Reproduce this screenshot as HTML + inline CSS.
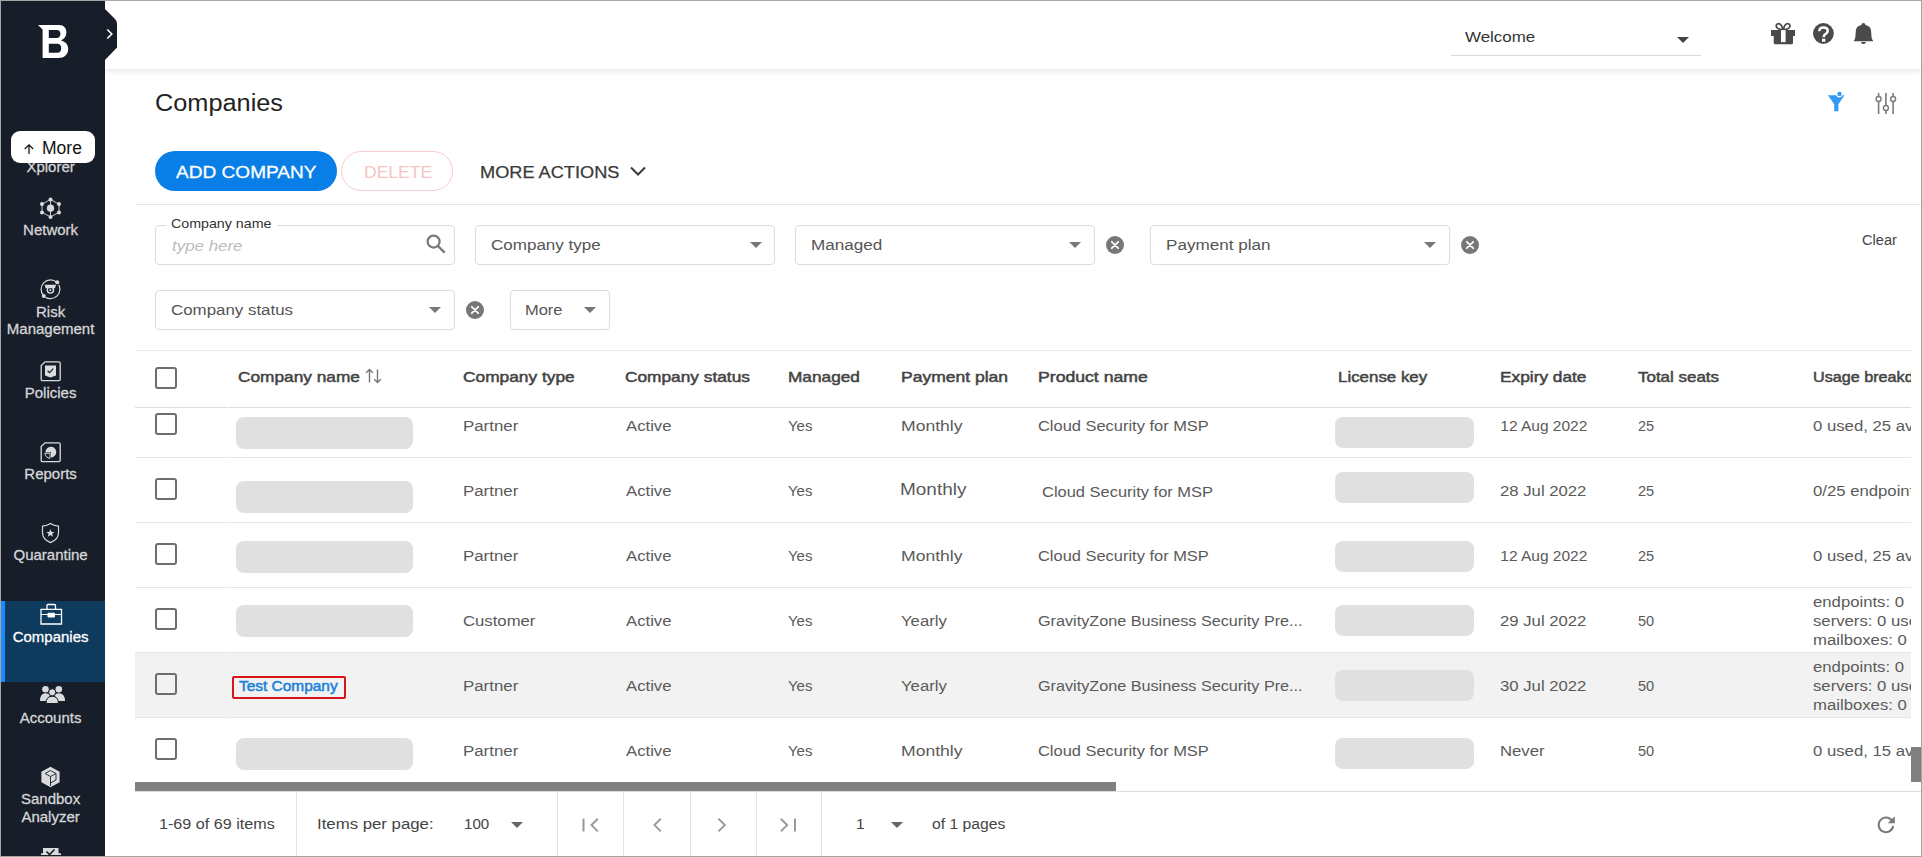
<!DOCTYPE html>
<html><head><meta charset="utf-8"><style>
*{box-sizing:border-box;margin:0;padding:0}
html,body{width:1922px;height:857px;overflow:hidden;background:#fff;font-family:"Liberation Sans",sans-serif}
.a{position:absolute;display:block}
.t{position:absolute;white-space:nowrap;line-height:1;z-index:3;transform-origin:0 0}
.frame{position:absolute;left:0;top:0;width:1922px;height:857px;border:1px solid #a6a6a6;z-index:100;pointer-events:none}
.cb{position:absolute;width:22px;height:22px;border:2px solid #6e6e6e;border-radius:3px;background:transparent}
.box{position:absolute;border:1px solid #dcdcdc;border-radius:4px;background:#fff}
.ph{position:absolute;background:#e0e0e0}
.hl{position:absolute;left:135px;width:1776px;height:1px;background:#e6e6e6}
.vl{position:absolute;width:1px;background:#e3e3e3}
</style></head><body>
<div class="frame"></div>
<div class="a" style="left:1px;top:1px;width:104px;height:855px;background:#181e29"></div>
<div class="a" style="left:1px;top:601px;width:104px;height:81px;background:#0e3a5e"></div>
<div class="a" style="left:1px;top:601px;width:4px;height:81px;background:#1a8cff"></div>
<svg class="a" style="left:105px;top:8px;z-index:5" width="14" height="54" viewBox="0 0 14 54"><path d="M0 1L10 11Q12 13 12 15.5V39.5L0 52Z" fill="#181e29"/><path d="M2.3 21.5L6.8 26L2.3 30.5" stroke="#fff" stroke-width="1.6" fill="none"/></svg>
<svg class="a" style="left:0;top:0" width="105" height="70" viewBox="0 0 105 70"><path fill="#fff" fill-rule="evenodd" d="M38 25H59C64 25 66.4 28.2 66.4 32.5C66.4 36 64.4 39 61 40.4C65.5 41.6 68.2 44.6 68.2 49C68.2 54.6 64.4 58 58 58H42.6V29.6Z M48.8 30.1H56.8C59.2 30.1 60.4 31.6 60.4 34C60.4 36.4 59.2 37.9 56.8 37.9H48.8Z M48.8 43.8H57.4C59.9 43.8 61.2 45.5 61.2 48.2C61.2 51 59.9 52.7 57.4 52.7H48.8Z"/></svg>
<div class="a" style="left:11px;top:131px;width:84px;height:32px;background:#fff;border-radius:9px;z-index:5"></div>
<svg class="a" style="left:23px;top:143px;z-index:6" width="12" height="12" viewBox="0 0 12 12"><path d="M6 11V1.8M1.8 6L6 1.8L10.2 6" stroke="#111" stroke-width="1.25" fill="none"/></svg>
<div class="t" style="left:42px;top:140px;font-size:17.5px;color:#111;z-index:6">More</div>
<div class="a" style="left:105px;top:1px;width:1816px;height:68px;background:#fff;box-shadow:0 2px 6px rgba(0,0,0,0.11);z-index:2"></div>
<div class="a" style="left:1451px;top:55px;width:250px;height:1px;background:#d9d9d9;z-index:3"></div>
<svg class="a" style="left:1677px;top:37px;z-index:3" width="12" height="6" viewBox="0 0 12 6"><path d="M0 0H12L6 6Z" fill="#444"/></svg>
<svg class="a" style="left:1769px;top:21px;z-index:3" width="110" height="26" viewBox="1769 21 110 26">
<g fill="#4a4a4a">
<path d="M1771 30.1H1795V35.9H1771Z M1773.7 35.9H1793V43.1Q1793 44.2 1791.9 44.2H1774.8Q1773.7 44.2 1773.7 43.1Z"/>
</g>
<path d="M1782.6 29.6C1779.6 29.8 1776.4 28.4 1776.2 26.2C1776 24.2 1778.2 23.2 1779.8 24C1781.4 24.8 1782.4 27.4 1782.6 29.6Z M1783.6 29.6C1786.6 29.8 1789.8 28.4 1790 26.2C1790.2 24.2 1788 23.2 1786.4 24C1784.8 24.8 1783.8 27.4 1783.6 29.6Z" fill="none" stroke="#4a4a4a" stroke-width="1.7"/>
<rect x="1781" y="30.1" width="4.6" height="12" fill="#fff"/>
<circle cx="1823.4" cy="33.5" r="10.4" fill="#4a4a4a"/>
<path d="M1819.3 31.3Q1819.3 27.6 1823.5 27.6Q1827.7 27.6 1827.7 30.9Q1827.7 32.8 1825.6 34Q1823.8 35 1823.8 36.4V37.3" fill="none" stroke="#fff" stroke-width="2.5"/>
<rect x="1822" y="38.8" width="3.3" height="2.9" fill="#fff"/>
<path fill="#4a4a4a" d="M1863.4 23Q1865.4 23 1865.5 24.9Q1870.4 25.9 1871 30.2L1871.6 37.4Q1871.9 39.4 1873 40.4V41.2H1853.9V40.4Q1855 39.4 1855.3 37.4L1855.9 30.2Q1856.5 25.9 1861.4 24.9Q1861.5 23 1863.4 23Z M1860.9 42H1866Q1865.6 44 1863.45 44Q1861.3 44 1860.9 42Z"/>
</svg>
<svg class="a" style="left:1825px;top:89px" width="80" height="28" viewBox="1825 89 80 28">
<path fill="#3399f5" d="M1828 95.3H1836Q1837.2 97.6 1839.4 97.6Q1841.5 97.6 1842.5 95.2L1844.5 95.3L1838.4 104.2V111.2H1834.2V104.2Z"/>
<circle cx="1839.5" cy="93.9" r="2.2" fill="#3399f5"/>
<g stroke="#7a7a7a" stroke-width="1.6" fill="none">
<path d="M1878.6 93V96.2M1878.6 101.8V114M1885.9 93V105.2M1885.9 110.8V114M1893.1 93V96.2M1893.1 101.8V114"/>
<circle cx="1878.6" cy="99" r="2.5" stroke-width="1.4"/><circle cx="1885.9" cy="108" r="2.5" stroke-width="1.4"/><circle cx="1893.1" cy="99" r="2.5" stroke-width="1.4"/>
</g></svg>
<div class="a" style="left:155px;top:151px;width:182px;height:40px;border-radius:20px;background:#087ee6"></div>
<div class="a" style="left:341px;top:151px;width:112px;height:40px;border-radius:20px;border:1px solid #f7cccc"></div>
<svg class="a" style="left:629px;top:165px" width="18" height="12" viewBox="0 0 18 12"><path d="M2 2.5L9 9.5L16 2.5" stroke="#3a3a3a" stroke-width="2" fill="none"/></svg>
<div class="a" style="left:135px;top:204px;width:1786px;height:1px;background:#e6e6e6"></div>
<div class="box" style="left:155px;top:225px;width:300px;height:40px"></div><div class="a" style="left:166px;top:222px;width:111px;height:6px;background:#fff"></div>
<svg class="a" style="left:425px;top:233px" width="22" height="22" viewBox="0 0 22 22"><circle cx="8.6" cy="8.6" r="6" stroke="#777" stroke-width="2.2" fill="none"/><path d="M13 13L19.6 19.6" stroke="#777" stroke-width="2.4"/></svg>
<div class="box" style="left:475px;top:225px;width:300px;height:40px"></div><svg class="a" style="left:749.5px;top:241.8px" width="12" height="6" viewBox="0 0 12 6"><path d="M0 0H12L6.0 6Z" fill="#777"/></svg><div class="box" style="left:795px;top:225px;width:300px;height:40px"></div><svg class="a" style="left:1068.5px;top:241.8px" width="12" height="6" viewBox="0 0 12 6"><path d="M0 0H12L6.0 6Z" fill="#777"/></svg><svg class="a" style="left:1106px;top:235.5px" width="18" height="18" viewBox="0 0 18 18"><circle cx="9" cy="9" r="9" fill="#777"/><path d="M5.8 5.8L12.2 12.2M12.2 5.8L5.8 12.2" stroke="#fff" stroke-width="1.8" stroke-linecap="round"/></svg><div class="box" style="left:1150px;top:225px;width:300px;height:40px"></div><svg class="a" style="left:1424px;top:241.8px" width="12" height="6" viewBox="0 0 12 6"><path d="M0 0H12L6.0 6Z" fill="#777"/></svg><svg class="a" style="left:1461px;top:235.5px" width="18" height="18" viewBox="0 0 18 18"><circle cx="9" cy="9" r="9" fill="#777"/><path d="M5.8 5.8L12.2 12.2M12.2 5.8L5.8 12.2" stroke="#fff" stroke-width="1.8" stroke-linecap="round"/></svg><div class="box" style="left:155px;top:290px;width:300px;height:40px"></div><svg class="a" style="left:429px;top:307px" width="12" height="6" viewBox="0 0 12 6"><path d="M0 0H12L6.0 6Z" fill="#777"/></svg><svg class="a" style="left:466px;top:301px" width="18" height="18" viewBox="0 0 18 18"><circle cx="9" cy="9" r="9" fill="#777"/><path d="M5.8 5.8L12.2 12.2M12.2 5.8L5.8 12.2" stroke="#fff" stroke-width="1.8" stroke-linecap="round"/></svg><div class="box" style="left:510px;top:290px;width:100px;height:40px"></div><svg class="a" style="left:584px;top:307px" width="12" height="6" viewBox="0 0 12 6"><path d="M0 0H12L6.0 6Z" fill="#777"/></svg><div class="a" style="left:135px;top:652px;width:1776px;height:65px;background:#f2f2f2"></div>
<div class="hl" style="top:350px;width:1786px;background:#e6e8eb"></div>
<div class="hl" style="top:407px;background:#d9dee4"></div>
<div class="a" style="left:227px;top:407px;width:1px;height:1px;background:#fff;z-index:1"></div>
<div class="hl" style="top:457px"></div>
<div class="a" style="left:227px;top:457px;width:1px;height:1px;background:#fff;z-index:1"></div>
<div class="hl" style="top:522px"></div>
<div class="a" style="left:227px;top:522px;width:1px;height:1px;background:#fff;z-index:1"></div>
<div class="hl" style="top:587px"></div>
<div class="a" style="left:227px;top:587px;width:1px;height:1px;background:#fff;z-index:1"></div>
<div class="hl" style="top:652px"></div>
<div class="a" style="left:227px;top:652px;width:1px;height:1px;background:#fff;z-index:1"></div>
<div class="hl" style="top:717px"></div>
<div class="a" style="left:227px;top:717px;width:1px;height:1px;background:#fff;z-index:1"></div>
<div class="cb" style="left:155px;top:367px"></div>
<div class="cb" style="left:155px;top:413px"></div>
<div class="cb" style="left:155px;top:478px"></div>
<div class="cb" style="left:155px;top:543px"></div>
<div class="cb" style="left:155px;top:608px"></div>
<div class="cb" style="left:155px;top:673px"></div>
<div class="cb" style="left:155px;top:738px"></div>
<div class="ph" style="left:236px;top:417px;width:177px;height:32px;border-radius:8px"></div>
<div class="ph" style="left:236px;top:481px;width:177px;height:32px;border-radius:8px"></div>
<div class="ph" style="left:236px;top:541px;width:177px;height:32px;border-radius:8px"></div>
<div class="ph" style="left:236px;top:605px;width:177px;height:32px;border-radius:8px"></div>
<div class="ph" style="left:236px;top:738px;width:177px;height:32px;border-radius:8px"></div>
<div class="ph" style="left:1335px;top:417px;width:139px;height:31px;border-radius:8px"></div>
<div class="ph" style="left:1335px;top:472px;width:139px;height:31px;border-radius:8px"></div>
<div class="ph" style="left:1335px;top:541px;width:139px;height:31px;border-radius:8px"></div>
<div class="ph" style="left:1335px;top:605px;width:139px;height:31px;border-radius:8px"></div>
<div class="ph" style="left:1335px;top:670px;width:139px;height:31px;border-radius:8px"></div>
<div class="ph" style="left:1335px;top:738px;width:139px;height:31px;border-radius:8px"></div>
<div class="a" style="left:232px;top:676px;width:114px;height:23px;border:2px solid #d9141b;z-index:4;border-radius:2px"></div>
<svg class="a" style="left:365px;top:368px" width="18" height="16" viewBox="0 0 18 16"><path d="M4.5 14.5V1.5M1.2 4.8L4.5 1.5L7.8 4.8M12.5 1.5V14.5M9.2 11.2L12.5 14.5L15.8 11.2" stroke="#777" stroke-width="1.4" fill="none"/></svg>
<div class="a" style="left:135px;top:782px;width:981px;height:9px;background:#808080;z-index:4"></div>
<div class="a" style="left:1911px;top:350px;width:10px;height:441px;background:#fff;z-index:4"></div>
<div class="a" style="left:1911px;top:747px;width:10px;height:35px;background:#808080;z-index:4"></div>
<div class="a" style="left:135px;top:791px;width:1786px;height:1px;background:#dcdcdc"></div>
<div class="vl" style="left:296px;top:792px;height:64px"></div>
<div class="vl" style="left:557px;top:792px;height:64px"></div>
<div class="vl" style="left:623px;top:792px;height:64px"></div>
<div class="vl" style="left:690px;top:792px;height:64px"></div>
<div class="vl" style="left:756px;top:792px;height:64px"></div>
<div class="vl" style="left:821px;top:792px;height:64px"></div>
<svg class="a" style="left:511px;top:822px" width="12" height="6" viewBox="0 0 12 6"><path d="M0 0H12L6.0 6Z" fill="#666"/></svg><svg class="a" style="left:891px;top:822px" width="12" height="6" viewBox="0 0 12 6"><path d="M0 0H12L6.0 6Z" fill="#666"/></svg><svg class="a" style="left:575px;top:812px" width="330" height="26" viewBox="575 812 330 26">
<g stroke="#9a9a9a" stroke-width="2" fill="none">
<path d="M583.5 818.6V831.6M597.8 818.8L591.5 825.1L597.8 831.4"/>
<path d="M660.8 818.8L654.5 825.1L660.8 831.4"/>
<path d="M718.5 818.8L724.8 825.1L718.5 831.4"/>
<path d="M780.8 818.8L787.1 825.1L780.8 831.4M795 818.6V831.6"/>
</g></svg>
<svg class="a" style="left:1875px;top:813px" width="22" height="22" viewBox="0 0 22 22"><path d="M17.3 8.2A7.3 7.3 0 1 0 18.2 13" stroke="#7a7a7a" stroke-width="2" fill="none"/><path d="M19.8 3.2V10.3H12.7Z" fill="#7a7a7a"/></svg>
<svg class="a" style="left:0;top:0" width="105" height="857" viewBox="0 0 105 857">
<g fill="#dadbdd" stroke="#dadbdd">
<!-- network -->
<g stroke-width="0.9" fill="none"><path d="M50.5 199.5L59 204.2V212.3L50.5 217L42 212.3V204.2Z M50.5 199.5V217"/></g>
<g stroke="none"><circle cx="50.5" cy="199.5" r="2"/><circle cx="59" cy="204" r="2"/><circle cx="59" cy="212.5" r="2"/><circle cx="50.5" cy="217" r="2"/><circle cx="42" cy="212.5" r="2"/><circle cx="42" cy="204" r="2"/><circle cx="50.5" cy="208.2" r="3.6"/></g>
<!-- risk -->
<circle cx="50.5" cy="289.3" r="9.4" fill="none" stroke-width="1.2" stroke-dasharray="20 3 28 3"/>
<circle cx="57.2" cy="282.3" r="2" stroke="none"/><circle cx="43.8" cy="296" r="2" stroke="none"/>
<path d="M44.6 284.8H56.1L55 288.2H45.7Z" stroke="none"/>
<circle cx="50.4" cy="290" r="3.1" fill="none" stroke-width="1.4"/><circle cx="50.4" cy="290" r="1" stroke="none"/>
<!-- policies -->
<path d="M45 361.8H58.8Q60.2 361.8 60.2 363.2V379.5Q60.2 380.6 59 380.6H42.3Q41.2 380.6 41.2 379.4V365.6Z" fill="none" stroke-width="1.3"/>
<path d="M45 365.5H56V375.5L50.5 377.5L45 375.5Z" stroke="none"/>
<path d="M47.6 370.8L49.6 372.6L53.2 368.6" stroke="#181e29" stroke-width="1.2" fill="none"/>
<!-- reports -->
<path d="M45 442.8H58.8Q60.2 442.8 60.2 444.2V460.5Q60.2 461.6 59 461.6H42.3Q41.2 461.6 41.2 460.4V446.6Z" fill="none" stroke-width="1.3"/>
<path d="M45.5 452.3A5.4 5.4 0 1 1 51 457.5V452.3Z" stroke="none"/>
<path d="M44.8 453.2H50V458.3Q46 458 44.8 453.2Z" fill="none" stroke-width="1"/>
<!-- quarantine -->
<path d="M50.5 523.4Q53.5 525.6 58.5 526.2V532.5Q58.5 539.5 50.5 542.6Q42.5 539.5 42.5 532.5V526.2Q47.5 525.6 50.5 523.4Z" fill="none" stroke-width="1.2"/>
<path d="M50.4 529.2L51.6 532H54.5L52.2 533.8L53 536.8L50.4 535L47.8 536.8L48.6 533.8L46.3 532H49.2Z" stroke="none"/>
<!-- accounts -->
<g stroke="none"><circle cx="45.5" cy="689.3" r="3.3"/><circle cx="58.8" cy="689.3" r="3.3"/><path d="M40 701Q40 693.2 45.5 693.2Q48.5 693.2 50 695L47 701Z M65 701Q65 693.2 58.8 693.2Q56 693.2 54.5 695L57.5 701Z"/></g>
<circle cx="52.2" cy="692.3" r="3.6" stroke="#181e29" stroke-width="1"/>
<path d="M46 703.5Q46 696.3 52.2 696.3Q58.4 696.3 58.4 703.5Z" stroke="#181e29" stroke-width="1"/>
<!-- sandbox -->
<path d="M50.5 766.8L59.6 771.8V782.2L50.5 787.2L41.4 782.2V771.8Z" stroke="none"/>
<path d="M45 773.5L50.5 770.5L56 773.5V780L50.5 783 M50.5 776.5V786 M45 773.5L50.5 776.5L56 773.5" stroke="#181e29" stroke-width="0.9" fill="none"/>
<!-- partial bottom -->
<path d="M43 848H58.5V853.5H43Z M41 853.2H61V855H41Z" stroke="none"/><path d="M46.5 851.5L49.5 854.5L54.5 849.5" stroke="#181e29" stroke-width="1.6" fill="none"/>
</g>
<g stroke="#fff" fill="#fff">
<!-- companies briefcase -->
<path d="M41 609.3H61.5V624H41Z" fill="none" stroke-width="1.3"/>
<path d="M47 609.3V605.5Q47 604.5 48 604.5H54.5Q55.5 604.5 55.5 605.5V609.3" fill="none" stroke-width="1.3"/>
<path d="M41 614.5H61.5" stroke-width="1"/>
<rect x="47.5" y="612.8" width="7.5" height="4.8" rx="1" stroke="none"/>
</g>
</svg>
<div class="t" id="t0" style="top:29.30px;font-size:15px;color:#333;transform:scaleX(1.1277);left:1464.60px;">Welcome</div>
<div class="t" id="t1" style="top:91.53px;font-size:23px;color:#222;transform:scaleX(1.1001);left:154.80px;">Companies</div>
<div class="t" id="t2" style="top:164.13px;font-size:16.5px;color:#fff;transform:scaleX(1.1554);left:176.00px;-webkit-text-stroke:0.3px #fff;">ADD COMPANY</div>
<div class="t" id="t3" style="top:164.13px;font-size:16.5px;color:#f6c4c4;transform:scaleX(1.0623);left:363.60px;">DELETE</div>
<div class="t" id="t4" style="top:164.13px;font-size:16.5px;color:#3a3a3a;transform:scaleX(1.1020);left:479.60px;-webkit-text-stroke:0.25px #3a3a3a;">MORE ACTIONS</div>
<div class="t" id="t5" style="top:217.30px;font-size:13px;color:#333;transform:scaleX(1.0943);left:171.30px;">Company name</div>
<div class="t" id="t6" style="top:238.10px;font-size:15px;color:#bdbdbd;transform:scaleX(1.1271);left:172.00px;font-style:italic;">type here</div>
<div class="t" id="t7" style="top:236.88px;font-size:15.5px;color:#555;transform:scaleX(1.0975);left:491.10px;">Company type</div>
<div class="t" id="t8" style="top:236.88px;font-size:15.5px;color:#555;transform:scaleX(1.1029);left:810.90px;">Managed</div>
<div class="t" id="t9" style="top:236.88px;font-size:15.5px;color:#555;transform:scaleX(1.1034);left:1166.20px;">Payment plan</div>
<div class="t" id="t10" style="top:233.15px;font-size:14px;color:#444;transform:scaleX(1.0433);left:1862.00px;">Clear</div>
<div class="t" id="t11" style="top:302.38px;font-size:15.5px;color:#555;transform:scaleX(1.0893);left:171.10px;">Company status</div>
<div class="t" id="t12" style="top:302.38px;font-size:15.5px;color:#555;transform:scaleX(1.0595);left:525.00px;">More</div>
<div class="t" id="t13" style="top:368.70px;font-size:15px;color:#444;transform:scaleX(1.1511);left:237.90px;-webkit-text-stroke:0.5px #444;">Company name</div>
<div class="t" id="t14" style="top:368.70px;font-size:15px;color:#444;transform:scaleX(1.1551);left:463.10px;-webkit-text-stroke:0.5px #444;">Company type</div>
<div class="t" id="t15" style="top:368.70px;font-size:15px;color:#444;transform:scaleX(1.1522);left:625.20px;-webkit-text-stroke:0.5px #444;">Company status</div>
<div class="t" id="t16" style="top:368.70px;font-size:15px;color:#444;transform:scaleX(1.1495);left:788.20px;-webkit-text-stroke:0.5px #444;">Managed</div>
<div class="t" id="t17" style="top:368.70px;font-size:15px;color:#444;transform:scaleX(1.1668);left:900.60px;-webkit-text-stroke:0.5px #444;">Payment plan</div>
<div class="t" id="t18" style="top:368.70px;font-size:15px;color:#444;transform:scaleX(1.1756);left:1038.20px;-webkit-text-stroke:0.5px #444;">Product name</div>
<div class="t" id="t19" style="top:368.70px;font-size:15px;color:#444;transform:scaleX(1.1263);left:1338.20px;-webkit-text-stroke:0.5px #444;">License key</div>
<div class="t" id="t20" style="top:368.70px;font-size:15px;color:#444;transform:scaleX(1.1526);left:1500.30px;-webkit-text-stroke:0.5px #444;">Expiry date</div>
<div class="t" id="t21" style="top:368.70px;font-size:15px;color:#444;transform:scaleX(1.1297);left:1638.00px;-webkit-text-stroke:0.5px #444;">Total seats</div>
<div class="t" id="usagehdr" style="top:368.70px;font-size:15px;color:#444;transform:scaleX(1.0782);left:1813.00px;-webkit-text-stroke:0.5px #444;">Usage breakdown</div>
<div class="t" id="t23" style="top:417.58px;font-size:15.5px;color:#5a5a5a;transform:scaleX(1.0875);left:463.30px;">Partner</div>
<div class="t" id="t24" style="top:417.58px;font-size:15.5px;color:#5a5a5a;transform:scaleX(1.0782);left:625.50px;">Active</div>
<div class="t" id="t25" style="top:417.58px;font-size:15.5px;color:#5a5a5a;transform:scaleX(0.9644);left:788.20px;">Yes</div>
<div class="t" id="t26" style="top:417.58px;font-size:15.5px;color:#5a5a5a;transform:scaleX(1.1336);left:900.60px;">Monthly</div>
<div class="t" id="t27" style="top:417.58px;font-size:15.5px;color:#5a5a5a;transform:scaleX(1.0602);left:1038.00px;">Cloud Security for MSP</div>
<div class="t" id="t28" style="top:417.58px;font-size:15.5px;color:#5a5a5a;left:1500.30px;">12 Aug 2022</div>
<div class="t" id="t29" style="top:417.58px;font-size:15.5px;color:#5a5a5a;transform:scaleX(0.9391);left:1638.00px;">25</div>
<div class="t" id="t30" style="top:417.58px;font-size:15.5px;color:#5a5a5a;transform:scaleX(1.0782);left:1813.00px;">0 used, 25 available</div>
<div class="t" id="t31" style="top:482.58px;font-size:15.5px;color:#5a5a5a;transform:scaleX(1.0875);left:463.30px;">Partner</div>
<div class="t" id="t32" style="top:482.58px;font-size:15.5px;color:#5a5a5a;transform:scaleX(1.0782);left:625.50px;">Active</div>
<div class="t" id="t33" style="top:482.58px;font-size:15.5px;color:#5a5a5a;transform:scaleX(0.9644);left:788.20px;">Yes</div>
<div class="t" id="t34" style="top:481.11px;font-size:17px;color:#5a5a5a;transform:scaleX(1.1167);left:899.90px;">Monthly</div>
<div class="t" id="t35" style="top:484.28px;font-size:15.5px;color:#5a5a5a;transform:scaleX(1.0615);left:1042.00px;">Cloud Security for MSP</div>
<div class="t" id="t36" style="top:482.58px;font-size:15.5px;color:#5a5a5a;transform:scaleX(1.0782);left:1500.30px;">28 Jul 2022</div>
<div class="t" id="t37" style="top:482.58px;font-size:15.5px;color:#5a5a5a;transform:scaleX(0.9391);left:1638.00px;">25</div>
<div class="t" id="t38" style="top:482.58px;font-size:15.5px;color:#5a5a5a;transform:scaleX(1.0782);left:1813.00px;">0/25 endpoints</div>
<div class="t" id="t39" style="top:547.58px;font-size:15.5px;color:#5a5a5a;transform:scaleX(1.0875);left:463.30px;">Partner</div>
<div class="t" id="t40" style="top:547.58px;font-size:15.5px;color:#5a5a5a;transform:scaleX(1.0782);left:625.50px;">Active</div>
<div class="t" id="t41" style="top:547.58px;font-size:15.5px;color:#5a5a5a;transform:scaleX(0.9644);left:788.20px;">Yes</div>
<div class="t" id="t42" style="top:547.58px;font-size:15.5px;color:#5a5a5a;transform:scaleX(1.1336);left:900.60px;">Monthly</div>
<div class="t" id="t43" style="top:547.58px;font-size:15.5px;color:#5a5a5a;transform:scaleX(1.0602);left:1038.00px;">Cloud Security for MSP</div>
<div class="t" id="t44" style="top:547.58px;font-size:15.5px;color:#5a5a5a;left:1500.30px;">12 Aug 2022</div>
<div class="t" id="t45" style="top:547.58px;font-size:15.5px;color:#5a5a5a;transform:scaleX(0.9391);left:1638.00px;">25</div>
<div class="t" id="t46" style="top:547.58px;font-size:15.5px;color:#5a5a5a;transform:scaleX(1.0782);left:1813.00px;">0 used, 25 available</div>
<div class="t" id="t47" style="top:612.58px;font-size:15.5px;color:#5a5a5a;transform:scaleX(1.0782);left:463.30px;">Customer</div>
<div class="t" id="t48" style="top:612.58px;font-size:15.5px;color:#5a5a5a;transform:scaleX(1.0782);left:625.50px;">Active</div>
<div class="t" id="t49" style="top:612.58px;font-size:15.5px;color:#5a5a5a;transform:scaleX(0.9644);left:788.20px;">Yes</div>
<div class="t" id="t50" style="top:612.58px;font-size:15.5px;color:#5a5a5a;transform:scaleX(1.0782);left:900.60px;">Yearly</div>
<div class="t" id="t51" style="top:612.58px;font-size:15.5px;color:#5a5a5a;transform:scaleX(1.0448);left:1038.00px;">GravityZone Business Security Pre...</div>
<div class="t" id="t52" style="top:612.58px;font-size:15.5px;color:#5a5a5a;transform:scaleX(1.0782);left:1500.30px;">29 Jul 2022</div>
<div class="t" id="t53" style="top:612.58px;font-size:15.5px;color:#5a5a5a;transform:scaleX(0.9391);left:1638.00px;">50</div>
<div class="t" id="t54" style="top:593.88px;font-size:15.5px;color:#5a5a5a;transform:scaleX(1.0782);left:1813.00px;">endpoints: 0</div>
<div class="t" id="t55" style="top:613.08px;font-size:15.5px;color:#5a5a5a;transform:scaleX(1.0782);left:1813.00px;">servers: 0 used</div>
<div class="t" id="t56" style="top:632.28px;font-size:15.5px;color:#5a5a5a;transform:scaleX(1.0782);left:1813.00px;">mailboxes: 0</div>
<div class="t" id="t57" style="top:677.58px;font-size:15.5px;color:#5a5a5a;transform:scaleX(1.0875);left:463.30px;">Partner</div>
<div class="t" id="t58" style="top:677.58px;font-size:15.5px;color:#5a5a5a;transform:scaleX(1.0782);left:625.50px;">Active</div>
<div class="t" id="t59" style="top:677.58px;font-size:15.5px;color:#5a5a5a;transform:scaleX(0.9644);left:788.20px;">Yes</div>
<div class="t" id="t60" style="top:677.58px;font-size:15.5px;color:#5a5a5a;transform:scaleX(1.0782);left:900.60px;">Yearly</div>
<div class="t" id="t61" style="top:677.58px;font-size:15.5px;color:#5a5a5a;transform:scaleX(1.0448);left:1038.00px;">GravityZone Business Security Pre...</div>
<div class="t" id="t62" style="top:677.58px;font-size:15.5px;color:#5a5a5a;transform:scaleX(1.0782);left:1500.30px;">30 Jul 2022</div>
<div class="t" id="t63" style="top:677.58px;font-size:15.5px;color:#5a5a5a;transform:scaleX(0.9391);left:1638.00px;">50</div>
<div class="t" id="t64" style="top:658.88px;font-size:15.5px;color:#5a5a5a;transform:scaleX(1.0782);left:1813.00px;">endpoints: 0</div>
<div class="t" id="t65" style="top:678.08px;font-size:15.5px;color:#5a5a5a;transform:scaleX(1.0782);left:1813.00px;">servers: 0 used</div>
<div class="t" id="t66" style="top:697.28px;font-size:15.5px;color:#5a5a5a;transform:scaleX(1.0782);left:1813.00px;">mailboxes: 0</div>
<div class="t" id="t67" style="top:742.58px;font-size:15.5px;color:#5a5a5a;transform:scaleX(1.0875);left:463.30px;">Partner</div>
<div class="t" id="t68" style="top:742.58px;font-size:15.5px;color:#5a5a5a;transform:scaleX(1.0782);left:625.50px;">Active</div>
<div class="t" id="t69" style="top:742.58px;font-size:15.5px;color:#5a5a5a;transform:scaleX(0.9644);left:788.20px;">Yes</div>
<div class="t" id="t70" style="top:742.58px;font-size:15.5px;color:#5a5a5a;transform:scaleX(1.1336);left:900.60px;">Monthly</div>
<div class="t" id="t71" style="top:742.58px;font-size:15.5px;color:#5a5a5a;transform:scaleX(1.0602);left:1038.00px;">Cloud Security for MSP</div>
<div class="t" id="t72" style="top:742.58px;font-size:15.5px;color:#5a5a5a;transform:scaleX(1.0782);left:1500.30px;">Never</div>
<div class="t" id="t73" style="top:742.58px;font-size:15.5px;color:#5a5a5a;transform:scaleX(0.9391);left:1638.00px;">50</div>
<div class="t" id="t74" style="top:742.58px;font-size:15.5px;color:#5a5a5a;transform:scaleX(1.0782);left:1813.00px;">0 used, 15 available</div>
<div class="t" id="t75" style="top:678.30px;font-size:15px;color:#1a80da;transform:scaleX(1.0287);left:239.20px;-webkit-text-stroke:0.5px #1a80da;">Test Company</div>
<div class="t" id="t76" style="top:816.48px;font-size:15.5px;color:#444;transform:scaleX(1.0418);left:158.90px;">1-69 of 69 items</div>
<div class="t" id="t77" style="top:816.48px;font-size:15.5px;color:#444;transform:scaleX(1.0826);left:317.30px;">Items per page:</div>
<div class="t" id="t78" style="top:816.48px;font-size:15.5px;color:#444;transform:scaleX(0.9749);left:463.80px;">100</div>
<div class="t" id="t79" style="top:816.48px;font-size:15.5px;color:#444;left:856.00px;">1</div>
<div class="t" id="t80" style="top:816.48px;font-size:15.5px;color:#444;transform:scaleX(1.0138);left:931.90px;">of 1 pages</div>
<div class="t" id="t81" style="top:158.80px;font-size:15px;color:#d5d6d8;left:-9.40px;width:120px;text-align:center;-webkit-text-stroke:0.3px #d5d6d8;">Xplorer</div>
<div class="t" id="t82" style="top:222.40px;font-size:15px;color:#d5d6d8;left:-9.40px;width:120px;text-align:center;-webkit-text-stroke:0.3px #d5d6d8;">Network</div>
<div class="t" id="t83" style="top:304.20px;font-size:15px;color:#d5d6d8;left:-9.40px;width:120px;text-align:center;-webkit-text-stroke:0.3px #d5d6d8;">Risk</div>
<div class="t" id="t84" style="top:321.00px;font-size:15px;color:#d5d6d8;left:-9.40px;width:120px;text-align:center;-webkit-text-stroke:0.3px #d5d6d8;">Management</div>
<div class="t" id="t85" style="top:384.70px;font-size:15px;color:#d5d6d8;left:-9.40px;width:120px;text-align:center;-webkit-text-stroke:0.3px #d5d6d8;">Policies</div>
<div class="t" id="t86" style="top:466.30px;font-size:15px;color:#d5d6d8;left:-9.40px;width:120px;text-align:center;-webkit-text-stroke:0.3px #d5d6d8;">Reports</div>
<div class="t" id="t87" style="top:547.10px;font-size:15px;color:#d5d6d8;left:-9.40px;width:120px;text-align:center;-webkit-text-stroke:0.3px #d5d6d8;">Quarantine</div>
<div class="t" id="t88" style="top:629.30px;font-size:15px;color:#ffffff;left:-9.40px;width:120px;text-align:center;-webkit-text-stroke:0.3px #ffffff;">Companies</div>
<div class="t" id="t89" style="top:709.90px;font-size:15px;color:#d5d6d8;left:-9.40px;width:120px;text-align:center;-webkit-text-stroke:0.3px #d5d6d8;">Accounts</div>
<div class="t" id="t90" style="top:790.80px;font-size:15px;color:#d5d6d8;left:-9.40px;width:120px;text-align:center;-webkit-text-stroke:0.3px #d5d6d8;">Sandbox</div>
<div class="t" id="t91" style="top:808.80px;font-size:15px;color:#d5d6d8;left:-9.40px;width:120px;text-align:center;-webkit-text-stroke:0.3px #d5d6d8;">Analyzer</div>
</body></html>
